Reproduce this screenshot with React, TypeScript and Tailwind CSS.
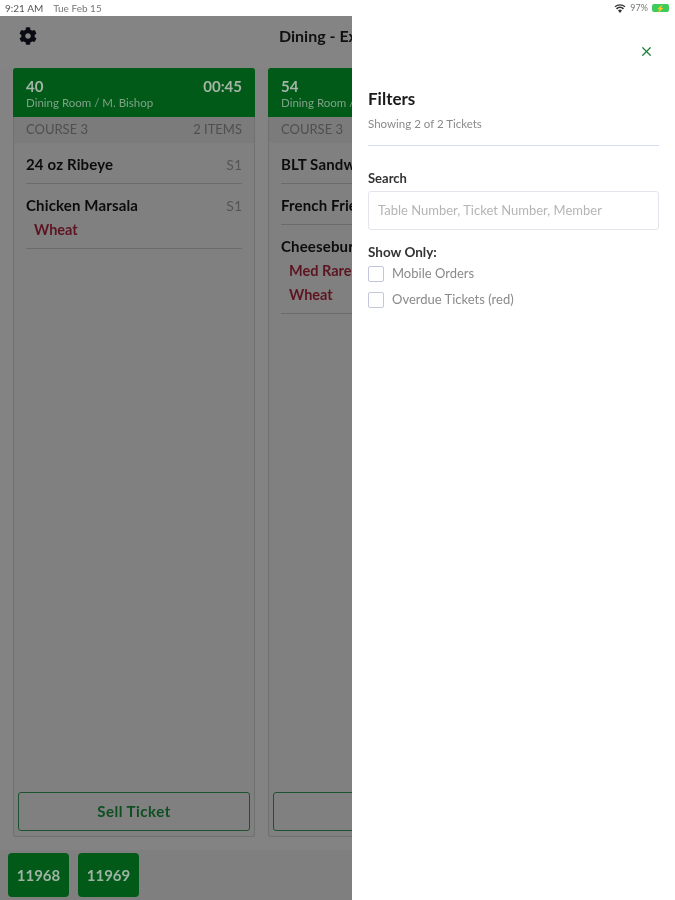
import { X } from "lucide-react";
import { FaCog } from "react-icons/fa";

const font = { fontFamily: "Lato, sans-serif" };

type Line = { name: string; seat?: string; mods?: string[] };

const tickets: { id: string; time: string; who: string; items: string; lines: Line[] }[] = [
  {
    id: "40",
    time: "00:45",
    who: "Dining Room / M. Bishop",
    items: "2 ITEMS",
    lines: [
      { name: "24 oz Ribeye", seat: "S1" },
      { name: "Chicken Marsala", seat: "S1", mods: ["Wheat"] },
    ],
  },
  {
    id: "54",
    time: "00:32",
    who: "Dining Room / J. Carter",
    items: "3 ITEMS",
    lines: [
      { name: "BLT Sandwich", seat: "S1" },
      { name: "French Fries", seat: "S1" },
      { name: "Cheeseburger", seat: "S1", mods: ["Med Rare", "Wheat"] },
    ],
  },
];

const TicketCard = ({ ticket }: { ticket: (typeof tickets)[number] }) => (
  <div className="w-[242px] shrink-0 flex flex-col rounded-[3px] border border-[#6f716f] border-t-0 bg-[#808080]">
    <div className="h-[49px] -mx-px rounded-t-[3px] bg-[#025a18] px-[13px] pt-[8px]">
      <div className="flex justify-between text-[15px] leading-[20px] font-bold text-[#a5b5a8]">
        <span>{ticket.id}</span>
        <span>{ticket.time}</span>
      </div>
      <div className="text-[11.5px] leading-[14px] text-[#7fa287]">{ticket.who}</div>
    </div>
    <div className="h-[26px] flex items-center justify-between px-[12px] text-[13px] text-[#4f4f4f] bg-[#7b7b7b]">
      <span>COURSE 3</span>
      <span>{ticket.items}</span>
    </div>
    <div className="flex-1 px-[12px]">
      {ticket.lines.map((line) => (
        <div key={line.name} className="border-b border-[#6b6b6b] pt-[11px] pb-[8px]">
          <div className="flex justify-between text-[15px] leading-[21px]">
            <span className="font-bold text-[#0c0c0c] tracking-[0.01em]">{line.name}</span>
            <span className="text-[14px] text-[#555555]">{line.seat}</span>
          </div>
          {line.mods?.map((mod) => (
            <div key={mod} className="mt-[3px] pl-[8px] text-[14.5px] leading-[21px] font-bold text-[#5c1420]">
              {mod}
            </div>
          ))}
        </div>
      ))}
    </div>
    <div className="px-[4px] pb-[5px]">
      <div className="h-[39px] flex items-center justify-center rounded-[3px] border border-[#1d5230] text-[15px] tracking-[0.5px] font-bold text-[#0d4f20]">
        Sell Ticket
      </div>
    </div>
  </div>
);

const FilterCheck = ({ label }: { label: string }) => (
  <div className="h-[26px] flex items-center gap-[8px]">
    <div className="size-[16px] rounded-[2px] border border-[#c4c7dc] bg-white" />
    <span className="text-[13px] text-[#8a8a8a]">{label}</span>
  </div>
);

export default function App() {
  return (
    <div className="w-[675px] h-[900px] flex flex-col overflow-hidden bg-white blur-[0.5px]" style={font}>
      {/* status bar */}
      <div className="h-[16px] shrink-0 flex items-center justify-between pl-[5px] pr-[6px] text-[10px] text-[#555555]">
        <div className="flex gap-[10px]">
          <span>9:21 AM</span>
          <span className="text-[#777777]">Tue Feb 15</span>
        </div>
        <div className="flex items-center gap-[4px]">
          <svg viewBox="0 0 12 10" className="w-[12px] h-[9px]" fill="#333333">
            <path d="M6 10 3.8 7.2a3.2 3.2 0 0 1 4.4 0zM2.8 6 1.5 4.6a6.6 6.6 0 0 1 9 0L9.2 6a4.8 4.8 0 0 0-6.4 0zM.8 3.7 0 2.6a9 9 0 0 1 12 0l-.8 1.1a7.6 7.6 0 0 0-10.4 0z" />
          </svg>
          <span className="text-[9px] text-[#777777]">97%</span>
          <div className="w-[17px] h-[8px] rounded-[2px] bg-[#3ecb5c] flex items-center justify-center text-[7px] leading-none font-bold text-[#14501f]">
            ⚡
          </div>
        </div>
      </div>

      <div className="flex-1 flex min-h-0">
        {/* dimmed screen behind the drawer */}
        <div className="w-[352px] shrink-0 overflow-hidden bg-[#7f7f7f]">
          <div className="w-[675px] h-full flex flex-col">
            <div className="h-[52px] shrink-0 flex items-center pl-[19px] pb-[12px] bg-[#848484]">
              <FaCog className="size-[18px] text-[#0a0a14]" />
              <span className="ml-[242px] text-[16px] font-bold text-[#101010]">Dining - Expo</span>
            </div>
            <div className="flex-1 min-h-0 flex gap-[13px] pl-[13px] pb-[13px] bg-[#838383]">
              {tickets.map((t) => (
                <TicketCard key={t.id} ticket={t} />
              ))}
            </div>
            <div className="h-[50px] shrink-0 flex gap-[9px] pl-[8px] pt-[3px] bg-[#7f7f7f]">
              {["11968", "11969"].map((n) => (
                <div
                  key={n}
                  className="w-[61px] h-[44px] flex items-center justify-center rounded-[4px] bg-[#025a18] text-[15px] font-bold text-[#9fb3a4]"
                >
                  {n}
                </div>
              ))}
            </div>
          </div>
        </div>

        {/* filter drawer */}
        <div className="flex-1 bg-white pl-[16px] pr-[16px]">
          <div className="flex justify-end pt-[28px] pr-[5px]">
            <X className="size-[15px] text-[#1a7f37]" strokeWidth={2} />
          </div>
          <div className="mt-[30px] text-[17px] leading-[20px] font-bold text-[#1a1a1a]">Filters</div>
          <div className="mt-[8px] text-[11.5px] leading-[14px] text-[#8a8a8a]">Showing 2 of 2 Tickets</div>
          <div className="mt-[14px] border-t border-[#d8daf0]" />
          <div className="mt-[24px] text-[13px] leading-[16px] font-bold text-[#333333]">Search</div>
          <div className="mt-[5px] h-[39px] flex items-center rounded-[3px] border border-[#e3e5ec] px-[9px] text-[13px] text-[#b5b5b5]">
            Table Number, Ticket Number, Member
          </div>
          <div className="mt-[14px] text-[13.5px] leading-[16px] font-bold text-[#333333]">Show Only:</div>
          <div className="mt-[1px]">
            <FilterCheck label="Mobile Orders" />
            <FilterCheck label="Overdue Tickets (red)" />
          </div>
        </div>
      </div>
    </div>
  );
}
